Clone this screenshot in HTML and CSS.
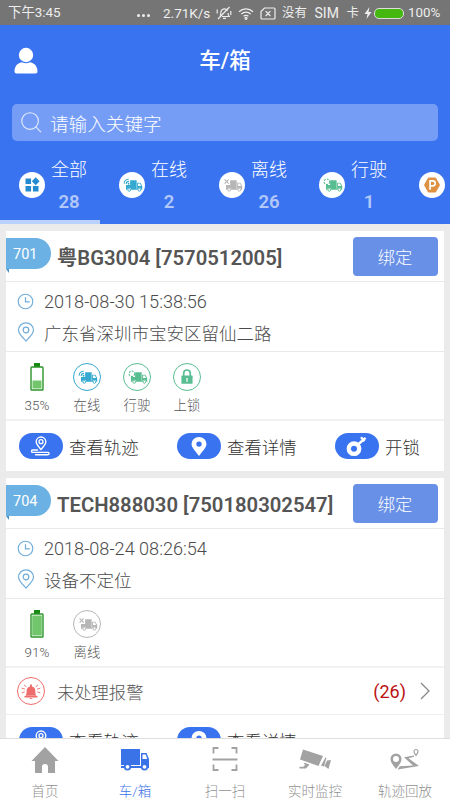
FILE: index.html
```html
<!DOCTYPE html>
<html lang="zh-CN">
<head>
<meta charset="utf-8">
<title>车/箱</title>
<link rel="stylesheet" href="styles.css">
</head>
<body>
<svg class="defs" aria-hidden="true">
  <symbol id="truck" viewBox="0 0 28 28">
    <path fill="currentColor" d="M12 9h7v9H9v-4h3zM7.500 14H9v5H7.500zM19.500 11.500h3.500l2 3.500v4h-1a2 2 0 0 0-4 0h-7a2 2 0 0 0-4 0H7.500v-1h12z"/>
    <circle cx="11" cy="19.200" r="1.500" fill="#fff" stroke="currentColor"/>
    <circle cx="22" cy="19.200" r="1.500" fill="#fff" stroke="currentColor"/>
    <path fill="#fff" d="M20.500 12.500h2l1.300 2.500h-3.300z"/>
  </symbol>
  <symbol id="online" viewBox="0 0 28 28">
    <use href="#truck"/>
    <path fill="none" stroke="currentColor" stroke-width="1.100" d="M5.500 12.500a5 5 0 0 1 5-4.800M7.700 13a3 3 0 0 1 3-2.900"/>
    <circle cx="10.300" cy="12.700" r="1" fill="currentColor"/>
  </symbol>
  <symbol id="driving" viewBox="0 0 28 28">
    <use href="#truck"/>
    <circle cx="8.500" cy="10.500" r="3" fill="#fff" stroke="currentColor" stroke-width="1.200" stroke-dasharray="2.200 1.200"/>
  </symbol>
  <symbol id="offline" viewBox="0 0 28 28">
    <use href="#truck"/>
    <path fill="none" stroke="#fff" stroke-width="3" d="m6 8 4.500 4.500M10.500 8 6 12.500"/>
    <path fill="none" stroke="currentColor" stroke-width="1.200" d="m6 8 4.500 4.500M10.500 8 6 12.500"/>
  </symbol>
  <symbol id="lock" viewBox="0 0 28 28">
    <rect x="8" y="12.500" width="12" height="8.800" rx=".6" fill="currentColor"/>
    <path fill="none" stroke="currentColor" stroke-width="1.800" d="M10.500 13v-3a3.500 3.500 0 0 1 7 0V13"/>
    <path stroke="#fff" stroke-width="1.400" d="M14 15v4"/>
  </symbol>
  <symbol id="clock" viewBox="0 0 18 18">
    <circle cx="9" cy="9" r="7.700" fill="none" stroke="currentColor" stroke-width="1.200"/>
    <path fill="none" stroke="currentColor" stroke-width="1.300" d="M9 4.500v5h4.500"/>
  </symbol>
  <symbol id="pin" viewBox="0 0 18 20">
    <path fill="none" stroke="currentColor" stroke-width="1.200" d="M9 19C5 14.800 1.500 11.700 1.500 8.200a7.500 7.300 0 0 1 15 0C16.500 11.700 13 14.800 9 19z"/>
    <circle cx="9" cy="8" r="2.800" fill="none" stroke="currentColor" stroke-width="1.200"/>
  </symbol>
  <symbol id="track" viewBox="0 0 44 26">
    <path fill="none" stroke="#fff" stroke-width="1.400" d="M22 16.500c-2.600-3-4.800-5-4.800-7.700a4.800 4.800 0 0 1 9.600 0c0 2.700-2.200 4.700-4.800 7.700z"/>
    <circle cx="22" cy="8.700" r="2" fill="none" stroke="#fff" stroke-width="1.300"/>
    <path fill="none" stroke="#fff" stroke-width="1.400" stroke-linecap="round" d="M18.500 17h-4.800a1.200 1.200 0 0 0 0 2.400h15.500a1.200 1.200 0 0 1 0 2.300H16.500"/>
  </symbol>
  <symbol id="detail" viewBox="0 0 44 26">
    <path fill="#fff" fill-rule="evenodd" d="M22 23c-3.500-5-7.500-8.300-7.500-12a7.500 7 0 0 1 15 0c0 3.700-4 7-7.500 12zm0-9.200a2.700 2.700 0 1 0 0-5.400 2.700 2.700 0 0 0 0 5.400z"/>
  </symbol>
  <symbol id="key" viewBox="0 0 44 26">
    <circle cx="19" cy="15.700" r="5.200" fill="none" stroke="#fff" stroke-width="4.400"/>
    <path fill="none" stroke="#fff" stroke-width="2.400" d="m23 11.500 7.600-6.600M26 4.200l3.500 4"/>
  </symbol>
  <symbol id="user" viewBox="0 0 24 28">
    <circle cx="12" cy="8" r="7.200" fill="#fff"/>
    <path fill="#fff" d="M.5 24.500C.5 18 5 15.600 8 15.200a9 9 0 0 0 8 0c3 .4 7.500 2.800 7.500 9.300q0 2-2 2h-19q-2 0-2-2z"/>
  </symbol>
</svg>

<div class="screen">
  <div class="statusbar">
    <span class="time">下午3:45</span>
    <span class="dots"><i></i><i></i><i></i></span>
    <span class="speed">2.71K/s</span>
    <svg class="mute" viewBox="0 0 16 14"><path d="M4 9.500c1-1 .8-2 1-4a3.500 3.500 0 0 1 6.500-.8M12 7c0 1.500.5 2.500 1.200 3.500H6M7 12.300h3M2 13 13.500 1M1.200 3.500v4M14.800 5v4"/></svg>
    <svg class="wifi" viewBox="0 0 16 13"><path d="M1 4.700a10 10 0 0 1 14 0M3.300 7a7 7 0 0 1 9.400 0M5.600 9.300a3.700 3.700 0 0 1 4.800 0"/><circle cx="8" cy="11.300" r="1"/></svg>
    <svg class="nosim" viewBox="0 0 16 13"><path d="M4.500 1H14q1 0 1 1v9q0 1-1 1H2q-1 0-1-1V4.500zM5.600 4.200l4.800 4.800M10.400 4.200 5.600 9"/></svg>
    <span class="carrier"><span>没有</span><span class="sim">SIM</span><span>卡</span></span>
    <svg class="bolt" viewBox="0 0 8 12"><path d="M5.500 0 .5 7h3L2.500 12l5-7h-3z"/></svg>
    <span class="charge"></span>
    <span class="percent">100%</span>
  </div>

  <header class="header">
    <div class="titlebar">
      <svg class="user"><use href="#user"/></svg>
      <h1>车/箱</h1>
    </div>
    <div class="search">
      <svg viewBox="0 0 22 22"><circle cx="9.500" cy="9.500" r="8.700"/><path d="m15.500 15.500 5.500 5.500"/></svg>
      <span>请输入关键字</span>
    </div>
    <nav class="tabs">
      <div class="tab active">
        <svg class="disc all" viewBox="0 0 28 28"><path fill="currentColor" d="M7 7h6v6H7zM7 15h6v6H7zM15 15h6v6h-6zM18 5.700l4.200 4.300-4.200 4.300-4.200-4.300z"/></svg>
        <div class="tabtext"><b>全部</b><em>28</em></div>
      </div>
      <div class="tab">
        <svg class="disc c-online"><use href="#online"/></svg>
        <div class="tabtext"><b>在线</b><em>2</em></div>
      </div>
      <div class="tab">
        <svg class="disc c-offline"><use href="#offline"/></svg>
        <div class="tabtext"><b>离线</b><em>26</em></div>
      </div>
      <div class="tab">
        <svg class="disc c-driving"><use href="#driving"/></svg>
        <div class="tabtext"><b>行驶</b><em>1</em></div>
      </div>
      <div class="tab">
        <svg class="disc parking" viewBox="0 0 28 28"><path fill="currentColor" stroke="currentColor" stroke-width="2" stroke-linejoin="round" d="M10.500 7h7l4 7-4 7h-7l-4-7z"/><path fill="none" stroke="#fff" stroke-width="1.800" d="M11.900 19V9.500h2.900a2.700 2.700 0 0 1 0 5.400h-3"/></svg>
      </div>
    </nav>
  </header>

  <main class="list">
    <article class="card">
      <div class="head">
        <span class="tag">701</span>
        <h2>粤BG3004 [7570512005]</h2>
        <button class="bind">绑定</button>
      </div>
      <div class="info">
        <p><svg class="clock"><use href="#clock"/></svg>2018-08-30 15:38:56</p>
        <p class="place"><svg class="pin"><use href="#pin"/></svg>广东省深圳市宝安区留仙二路</p>
      </div>
      <div class="states">
        <div class="state"><svg class="battery" viewBox="0 0 14 28"><path fill="#188a12" d="M4 0h6v4H4z"/><rect x="1" y="4" width="12" height="23" rx=".8" fill="#fff" stroke="#2c942a" stroke-width="1.400"/><path fill="#71c66c" d="M2.500 17.500h9v8h-9z"/></svg>35%</div>
        <div class="state"><svg class="ring c-online"><use href="#online"/></svg>在线</div>
        <div class="state"><svg class="ring c-driving"><use href="#driving"/></svg>行驶</div>
        <div class="state"><svg class="ring c-driving"><use href="#lock"/></svg>上锁</div>
      </div>
      <div class="actions">
        <div class="action"><svg class="pill"><use href="#track"/></svg>查看轨迹</div>
        <div class="action"><svg class="pill"><use href="#detail"/></svg>查看详情</div>
        <div class="action"><svg class="pill"><use href="#key"/></svg>开锁</div>
      </div>
    </article>

    <article class="card">
      <div class="head">
        <span class="tag">704</span>
        <h2>TECH888030 [750180302547]</h2>
        <button class="bind">绑定</button>
      </div>
      <div class="info">
        <p><svg class="clock"><use href="#clock"/></svg>2018-08-24 08:26:54</p>
        <p class="place"><svg class="pin"><use href="#pin"/></svg>设备不定位</p>
      </div>
      <div class="states">
        <div class="state"><svg class="battery" viewBox="0 0 14 28"><path fill="#188a12" d="M4 0h6v4H4z"/><rect x="1" y="4" width="12" height="23" rx=".8" fill="#fff" stroke="#2c942a" stroke-width="1.400"/><path fill="#71c66c" d="M2.200 5.500h9.600v20H2.200z"/></svg>91%</div>
        <div class="state"><svg class="ring c-offline"><use href="#offline"/></svg>离线</div>
      </div>
      <div class="alarm">
        <svg class="ring bell" viewBox="0 0 28 28"><path fill="currentColor" d="M8 19c1.500-1.500 1.300-3 1.300-5 0-2.500 1.500-4.400 3.700-4.800V7h2v2.200c2.200.4 3.700 2.300 3.700 4.800 0 2-.2 3.500 1.300 5zM7 19.500h14v1.400H7zM12 21.600h4q-2 2-4 0z"/><path fill="none" stroke="currentColor" stroke-width="1" d="M6.500 7.500 9 9.500M4 11l3.500 1M4 16l3.200-1M21.500 7.500 19 9.500M24 11l-3.500 1M24 16l-3.200-1"/></svg>
        <span>未处理报警</span>
        <strong>(26)</strong>
        <svg class="chevron" viewBox="0 0 10 18"><path d="m1 1 8 8-8 8"/></svg>
      </div>
      <div class="actions">
        <div class="action"><svg class="pill"><use href="#track"/></svg>查看轨迹</div>
        <div class="action"><svg class="pill"><use href="#detail"/></svg>查看详情</div>
      </div>
    </article>
  </main>

  <nav class="bottom">
    <div class="item"><svg viewBox="0 0 32 30"><path fill="currentColor" d="M16 2 29.500 16H26v12h-7v-6a3 3 0 0 0-6 0v6H6V16H2.500z"/></svg>首页</div>
    <div class="item on"><svg viewBox="0 0 32 30"><path fill="currentColor" d="M2 4h19v16H2zM22 8h5.500l2.500 6v9H2v-2h20z"/><path fill="#fff" d="M23.500 9.500h3.200l1.500 4.500h-4.700z"/><g fill="#fff" stroke="currentColor" stroke-width="1.800"><circle cx="8.500" cy="21.800" r="2.800"/><circle cx="25.500" cy="21.800" r="2.800"/></g></svg>车/箱</div>
    <div class="item"><svg viewBox="0 0 32 30"><path fill="none" stroke="currentColor" stroke-width="1.800" d="M4.500 8.500v-5.500h5M22.500 3h5v5.500M27.500 19.500v5.500h-5M9.500 25h-5v-5.500M3.500 14.500h25"/></svg>扫一扫</div>
    <div class="item"><svg viewBox="0 0 32 30"><path fill="currentColor" d="m4 4.500 20 6.500-4.500 10L1 14.500zM24.500 16l2-3.500 1 .3-2.500 8.700-3-1zM28 15.500l4-.5-2.500 9-4-3zM4.500 17.500l6 2-3.500 4H.5v-1.800h4l1.500-1.700z"/></svg>实时监控</div>
    <div class="item"><svg viewBox="0 0 32 30"><path fill="currentColor" fill-rule="evenodd" d="M7 24C4 20 1.500 17.500 1.500 14a5.500 5.500 0 0 1 11 0c0 3.500-2.500 6-5.500 10zm0-7a3 3 0 1 0 0-6 3 3 0 0 0 0 6z"/><path fill="currentColor" d="m8.500 24.500 2.300-3.300 13.200-.7L15 12.300l10-1.800v1.200l-5.500 1.500L30 21z"/><path fill="none" stroke="currentColor" stroke-width="1.200" d="M27 10.500c-1.300-1.800-2-2.600-2-4a2 2 0 0 1 4 0c0 1.400-.7 2.200-2 4z"/></svg>轨迹回放</div>
  </nav>
</div>
</body>
</html>
```
FILE: styles.css
```css
* { box-sizing: border-box; }
body {
  margin: 0;
  font-family: Roboto, "Noto Sans CJK SC", sans-serif;
  font-weight: 300;
  color: #555;
}
h1, h2, p { margin: 0; }
svg { display: block; flex: none; }
.defs { position: absolute; width: 0; height: 0; }
.screen {
  width: 450px;
  height: 800px;
  display: flex;
  flex-direction: column;
  overflow: hidden;
  background: #ebebeb;
}

.statusbar {
  flex: none;
  height: 25px;
  padding: 1px 8px 0;
  display: flex;
  align-items: center;
  background: #757575;
  color: #eee;
  font-size: 13px;
  font-weight: 400;
  line-height: 22px;
  white-space: nowrap;
}
.statusbar svg { fill: none; stroke: #eee; stroke-width: 1.2; }
.time { width: 129px; font-size: 13.4px; }
.dots { display: flex; gap: 2px; width: 26px; padding-top: 5px; }
.dots i { width: 3px; height: 3px; border-radius: 50%; background: #eee; }
.speed { width: 53px; font-size: 13.5px; }
.statusbar .mute { width: 16px; height: 14px; }
.statusbar .wifi { width: 16px; height: 13px; margin-left: 6px; }
.statusbar .nosim { width: 16px; height: 13px; margin-left: 6px; }
.carrier { width: 77px; margin-left: 6px; font-size: 12.4px; display: flex; justify-content: space-between; }
.sim { font-size: 14px; }
.statusbar .bolt { width: 8px; height: 12px; margin-left: 5px; fill: #eee; stroke: none; }
.charge {
  width: 30px;
  height: 11px;
  margin-left: 2px;
  border: 1px solid #ddd;
  border-radius: 5px;
  background: #45b810;
}
.percent { margin-left: 4px; font-size: 13.3px; }

.header {
  flex: none;
  height: 199px;
  display: flex;
  flex-direction: column;
  background: #3a73f0;
  color: #fff;
}
.titlebar {
  height: 79px;
  padding: 0 14px 7px;
  display: grid;
  grid-template-columns: 24px 1fr 24px;
  align-items: center;
}
.user { width: 24px; height: 28px; }
h1 { text-align: center; font-size: 21.5px; font-weight: 500; line-height: 30px; }
.search {
  height: 37px;
  margin: 0 12px;
  padding: 0 9px;
  display: flex;
  align-items: center;
  gap: 8px;
  border-radius: 5px;
  background: #759df5;
  font-size: 18.6px;
}
.search span { padding-bottom: 1px; }
.search svg { width: 21px; height: 21px; fill: none; stroke: #e4ecfd; stroke-width: 1.2; }
.tabs { display: flex; height: 83px; overflow: hidden; }
.tab {
  flex: 0 0 100px;
  padding: 15px 0 0 18.5px;
  display: flex;
  gap: 5.5px;
  border-bottom: 4px solid transparent;
}
.tab.active { border-bottom-color: #b9d1fb; }
.disc { width: 26px; height: 26px; margin-top: 16px; border-radius: 50%; background: #fff; }
.disc.all { color: #248bd0; }
.disc.parking { color: #df9143; }
.c-online { color: #35a9d0; }
.c-offline { color: #b6b6b6; }
.c-driving { color: #58bd91; }
.tabtext { width: 38px; text-align: center; }
.tabtext b, .tabtext em { display: block; font-size: 18px; line-height: 28px; }
.tabtext b { font-weight: 300; }
.tabtext em { margin-top: 4px; font-size: 18.5px; font-style: normal; font-weight: 600; color: #b1c8f9; }

.list { flex: 1; min-height: 0; padding: 7px 6px 0; overflow: hidden; }
.card { margin-bottom: 7px; background: #fff; }
.head {
  height: 51px;
  padding-right: 6.5px;
  display: flex;
  align-items: center;
  border-bottom: 1px solid #e9e9e9;
}
.tag {
  position: relative;
  flex: none;
  width: 45px;
  height: 31px;
  margin: 0 6px 5px 0;
  padding-left: 7px;
  border-radius: 0 16px 16px 0;
  background: #6cb1e3;
  color: #fff;
  font-size: 14.5px;
  font-weight: 400;
  line-height: 33px;
}
.tag::after {
  content: "";
  position: absolute;
  left: 0;
  top: 31px;
  border-style: solid;
  border-width: 0 3px 4px 0;
  border-color: transparent #4b93c8 transparent transparent;
}
h2 { flex: 1; font-size: 20.3px; font-weight: 600; line-height: 30px; white-space: nowrap; padding-top: 3px; }
.bind {
  flex: none;
  width: 85px;
  height: 39px;
  padding: 0;
  border: 0;
  border-radius: 4px;
  background: #6990e7;
  color: #fff;
  font: inherit;
  font-size: 17.3px;
}
.info { height: 70px; padding: 4px 0 0 11px; border-bottom: 1px solid #e9e9e9; font-size: 18.1px; }
.info p { display: flex; align-items: center; height: 31px; color: #4b4b4b; }
.info .place { font-size: 17.5px; }
.info svg { color: #70add9; }
.clock { width: 17px; height: 17px; margin: 0 10px 1px 0; }
.pin { width: 18px; height: 20px; margin: 0 9px 1px 0; }
.states { display: flex; height: 69px; padding: 11px 0 0 6px; border-bottom: 2px solid #f1f1f1; }
.state {
  width: 50px;
  display: flex;
  flex-direction: column;
  align-items: center;
  gap: 5px;
  font-size: 13.4px;
  line-height: 20px;
  color: #555;
}
.battery { width: 14px; height: 28px; }
.ring { width: 28px; height: 28px; border: 1px solid currentColor; border-radius: 50%; }
.actions { display: flex; height: 50px; padding-left: 13px; }
.action { flex: 0 0 158px; display: flex; align-items: center; gap: 6px; font-size: 17.4px; color: #333; }
.pill { width: 44px; height: 26px; border-radius: 13px; background: #3a73f0; }
.alarm { display: flex; align-items: center; height: 47px; padding: 0 14px 0 11px; border-bottom: 1px solid #eee; font-size: 17.3px; }
.bell { color: #ef6c6c; margin-right: 12px; }
.alarm span { flex: 1; }
.alarm strong { font-size: 18px; font-weight: 400; color: #bb1111; }
.chevron { width: 10px; height: 18px; margin-left: 14px; fill: none; stroke: #888; stroke-width: 1.3; }

.bottom {
  flex: none;
  height: 62px;
  display: flex;
  border-top: 1px solid #ddd;
  background: #fff;
}
.item {
  flex: 1;
  padding-top: 6px;
  display: flex;
  flex-direction: column;
  align-items: center;
  gap: 6px;
  font-size: 13.5px;
  line-height: 20px;
  color: #909090;
}
.item svg { width: 32px; height: 30px; color: #a2a2a2; }
.item.on, .item.on svg { color: #3a73e8; }
```
